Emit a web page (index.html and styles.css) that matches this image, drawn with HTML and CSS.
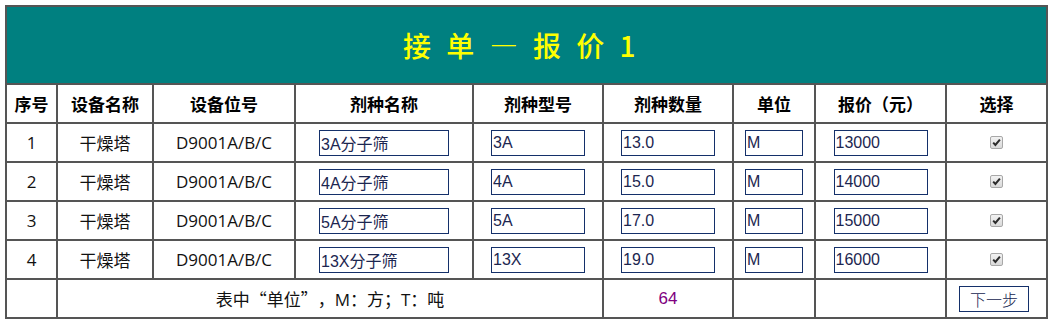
FILE: index.html
```html
<!DOCTYPE html>
<html lang="zh">
<head>
<meta charset="utf-8">
<title>接单—报价</title>
<link rel="stylesheet" href="styles.css">
</head>
<body>
<table class="quote">
  <colgroup>
    <col class="c1"><col class="c2"><col class="c3"><col class="c4"><col class="c5"><col class="c6"><col class="c7"><col class="c8"><col class="c9">
  </colgroup>
  <tr class="title-row"><td colspan="9" class="title">接 单 — 报 价 1</td></tr>
  <tr class="head-row">
    <th>序号</th><th>设备名称</th><th>设备位号</th><th>剂种名称</th><th>剂种型号</th><th>剂种数量</th><th>单位</th><th>报价（元）</th><th>选择</th>
  </tr>
  <tr class="row">
    <td>1</td><td>干燥塔</td><td>D9001A/B/C</td>
    <td><input class="inp w-name" value="3A分子筛"></td>
    <td><input class="inp w-mid" value="3A"></td>
    <td><input class="inp w-mid" value="13.0"></td>
    <td><input class="inp w-unit" value="M"></td>
    <td><input class="inp w-mid" value="13000"></td>
    <td><span class="chk"><svg width="13" height="13" viewBox="0 0 13 13"><path d="M3.2 6.6 L5.4 9 L9.9 3.6" fill="none" stroke="#2b2b2b" stroke-width="2"/></svg></span></td>
  </tr>
  <tr class="row">
    <td>2</td><td>干燥塔</td><td>D9001A/B/C</td>
    <td><input class="inp w-name" value="4A分子筛"></td>
    <td><input class="inp w-mid" value="4A"></td>
    <td><input class="inp w-mid" value="15.0"></td>
    <td><input class="inp w-unit" value="M"></td>
    <td><input class="inp w-mid" value="14000"></td>
    <td><span class="chk"><svg width="13" height="13" viewBox="0 0 13 13"><path d="M3.2 6.6 L5.4 9 L9.9 3.6" fill="none" stroke="#2b2b2b" stroke-width="2"/></svg></span></td>
  </tr>
  <tr class="row">
    <td>3</td><td>干燥塔</td><td>D9001A/B/C</td>
    <td><input class="inp w-name" value="5A分子筛"></td>
    <td><input class="inp w-mid" value="5A"></td>
    <td><input class="inp w-mid" value="17.0"></td>
    <td><input class="inp w-unit" value="M"></td>
    <td><input class="inp w-mid" value="15000"></td>
    <td><span class="chk"><svg width="13" height="13" viewBox="0 0 13 13"><path d="M3.2 6.6 L5.4 9 L9.9 3.6" fill="none" stroke="#2b2b2b" stroke-width="2"/></svg></span></td>
  </tr>
  <tr class="row">
    <td>4</td><td>干燥塔</td><td>D9001A/B/C</td>
    <td><input class="inp w-name" value="13X分子筛"></td>
    <td><input class="inp w-mid" value="13X"></td>
    <td><input class="inp w-mid" value="19.0"></td>
    <td><input class="inp w-unit" value="M"></td>
    <td><input class="inp w-mid" value="16000"></td>
    <td><span class="chk"><svg width="13" height="13" viewBox="0 0 13 13"><path d="M3.2 6.6 L5.4 9 L9.9 3.6" fill="none" stroke="#2b2b2b" stroke-width="2"/></svg></span></td>
  </tr>
  <tr class="row foot">
    <td></td>
    <td colspan="4">表中<span class="fw fw-l">“</span>单位<span class="fw fw-r">”</span>，M：方；T：吨</td>
    <td class="total">64</td>
    <td></td>
    <td></td>
    <td><button class="next" type="button">下一步</button></td>
  </tr>
</table>
</body>
</html>
```

FILE: styles.css
```css
body {
  margin: 0;
  padding: 5px;
  background: #ffffff;
  font-family: "Open Sans", "Noto Sans CJK SC", sans-serif;
}

.quote {
  width: 1041px;
  table-layout: fixed;
  border-collapse: separate;
  border-spacing: 0;
  border: 1px solid #555555;
  color: #111111;
}

.c1 { width: 51px; }
.c2 { width: 96px; }
.c3 { width: 142px; }
.c4 { width: 178px; }
.c5 { width: 130px; }
.c6 { width: 130px; }
.c7 { width: 82px; }
.c8 { width: 131px; }
.c9 { width: 101px; }

.quote td,
.quote th {
  border: 1px solid #555555;
  padding: 0;
  text-align: center;
  vertical-align: middle;
  font-size: 17px;
}

.title-row { height: 78px; }

.quote .title {
  background: #008080;
  color: #ffff00;
  font-size: 28px;
  font-weight: 500;
  letter-spacing: 4.5px;
  padding-right: 10px;
  font-family: "Noto Sans CJK SC", sans-serif;
}

.head-row { height: 39px; }

.head-row th {
  font-weight: bold;
  color: #000000;
  font-family: "Noto Sans CJK SC", sans-serif;
}

.row { height: 39px; }

.fw {
  display: inline-block;
  width: 1em;
  font-family: "Noto Sans CJK SC", sans-serif;
}

.fw-l { text-align: right; }
.fw-r { text-align: left; }

.inp {
  box-sizing: border-box;
  height: 26px;
  margin: 0;
  padding: 0 1px;
  border: 1px solid #14306a;
  font-family: "Liberation Sans", "Noto Sans CJK SC", sans-serif;
  font-size: 16px;
  color: #1c2650;
  background: #ffffff;
  vertical-align: middle;
}

.w-name { width: 130px; }
.w-mid { width: 94px; }
.w-unit { width: 58px; }

.chk {
  display: inline-block;
  box-sizing: border-box;
  width: 13px;
  height: 13px;
  border: 1px solid #a8a8a8;
  border-radius: 2px;
  background: linear-gradient(#f2f2f2, #d9d9d9);
  vertical-align: middle;
  line-height: 0;
  margin-top: -4px;
}

.chk svg {
  margin: -1px 0 0 -1px;
}

.total {
  color: #800080;
  font-family: "Liberation Sans", sans-serif;
}

.next {
  box-sizing: border-box;
  width: 70px;
  height: 26px;
  margin: 0 5px 0 0;
  padding: 0;
  border: 1px solid #14306a;
  background: #ffffff;
  color: #14244f;
  font-family: "Noto Sans CJK SC", sans-serif;
  font-size: 16px;
  font-weight: 300;
}
```
